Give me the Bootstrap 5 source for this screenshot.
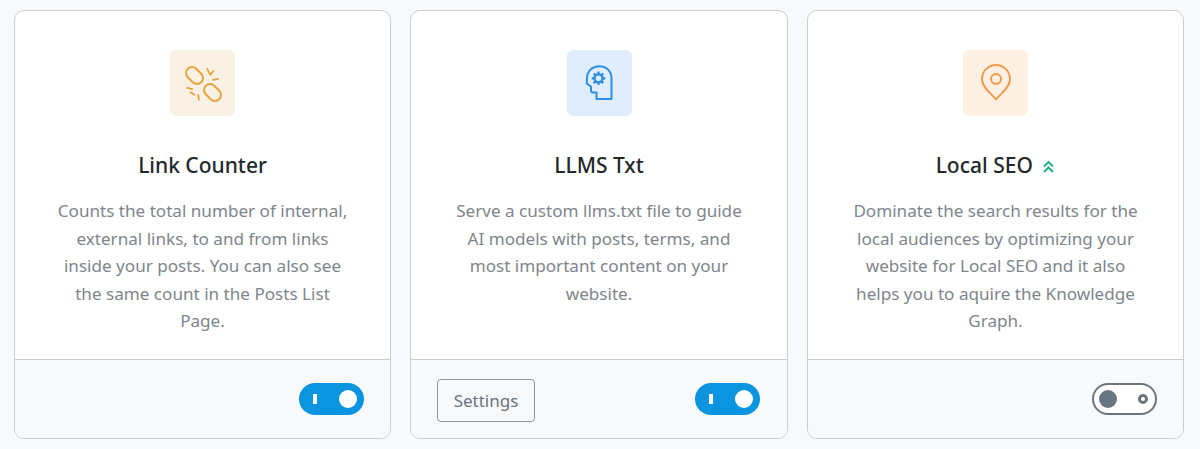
<!DOCTYPE html>
<html lang="en">
<head>
  <meta charset="UTF-8" />
  <title>Modules</title>
  <link href="https://cdn.jsdelivr.net/npm/bootstrap@5.3.0/dist/css/bootstrap.min.css" rel="stylesheet">
  <style>
    body { background: #f7f9fb; font-family: "Noto Sans", sans-serif; overflow: hidden; }
    .module-grid { display: grid; grid-template-columns: 377px 378px 377px; gap: 19px; padding: 10px 0 0 14px; height: 439px; }
    .module-card { border: 1px solid #c9ced6; border-radius: 10px; background: #fff; overflow: hidden; }
    .module-body { height: 348px; padding: 39px 40px 0; text-align: center; }
    .module-icon { width: 65px; height: 66px; border-radius: 6px; margin: 0 auto 35px; display: flex; align-items: center; justify-content: center; }
    .icon-link-tone { background: #f9f1e4; }
    .icon-llms-tone { background: #dfedfd; }
    .icon-local-tone { background: #fef0e3; }
    .module-title { font-size: 21px; font-weight: 500; line-height: 28px; color: #23282d; margin: 0 0 18px; }
    .module-text { font-size: 17.1px; line-height: 27.5px; color: #7f858c; margin: 0; }
    .module-foot { height: 79px; border-top: 1px solid #c9ced6; background: #f7f9fb; padding: 0 26px; }
    .foot-middle { padding-right: 27px; }
    .settings-btn { font-size: 17px; color: #6b7280; border: 1px solid #8f959c; border-radius: 4px; background: transparent; width: 98px; height: 43px; padding: 0; margin-top: 3px; }
    .toggle-pill { width: 65px; height: 32px; border-radius: 16px; position: relative; box-sizing: border-box; }
    .toggle-on { background: #0b95e0; }
    .toggle-off { background: #fff; border: 2px solid #6c757d; }
    .toggle-on::before { content: ""; position: absolute; left: 14px; top: 11px; width: 4px; height: 10px; background: #fff; }
    .toggle-on::after { content: ""; position: absolute; right: 7px; top: 7px; width: 18px; height: 18px; border-radius: 50%; background: #fff; }
    .toggle-off::before { content: ""; position: absolute; left: 5px; top: 5px; width: 18px; height: 18px; border-radius: 50%; background: #687684; }
    .toggle-off::after { content: ""; position: absolute; right: 7px; top: 9px; width: 10px; height: 10px; border-radius: 50%; border: 3px solid #6c757d; background: #fff; }
    .pro-mark { margin-left: 4px; vertical-align: -1px; }
  </style>
</head>
<body>
  <div class="module-grid">
    <div class="module-card d-flex flex-column">
      <div class="module-body">
        <div class="module-icon icon-link-tone">
          <svg width="40" height="40" viewBox="0 0 40 40" fill="none" stroke="#e6a33e" stroke-width="2" stroke-linecap="round">
            <rect x="2" y="6.500" width="19" height="12" rx="6" transform="rotate(45 11.500 12.500)"/>
            <rect x="20" y="23.500" width="19" height="12" rx="6" transform="rotate(45 29.500 29.500)"/>
            <path d="M24.200 5.800l2.600 5M30.200 8.200l-2.700 3.600M30.200 16.800l5-1M4.200 24.800l5 1.400M7.500 29.200l4 2.600M15.200 31.800l.6 5" stroke-width="1.800"/>
          </svg>
        </div>
        <h5 class="module-title">Link Counter</h5>
        <p class="module-text">Counts the total number of internal, external links, to and from links inside your posts. You can also see the same count in the Posts List Page.</p>
      </div>
      <div class="module-foot d-flex align-items-center justify-content-end">
        <div class="toggle-pill toggle-on"></div>
      </div>
    </div>
    <div class="module-card d-flex flex-column">
      <div class="module-body">
        <div class="module-icon icon-llms-tone">
          <svg width="40" height="40" viewBox="0 0 40 40" fill="none" stroke="#2b8fe6" stroke-width="2" stroke-linejoin="round">
            <path d="M17.500 36V29.500H14Q12 29.500 12 27V23.500L7.800 20.500Q8 17 8 15C8 8 13.500 3.200 20.500 3.200C27.500 3.200 32.500 8.500 32.500 15V36Z"/>
            <circle cx="19.500" cy="15.300" r="4" stroke-width="2.400"/>
            <path d="M19.500 8.500v3M19.500 19v3M12.700 15.300h3M23.300 15.300h3M14.700 10.500l2 2M22.300 18.100l2 2M14.700 20.100l2-2M22.300 12.500l2-2" stroke-width="2.200"/>
          </svg>
        </div>
        <h5 class="module-title">LLMS Txt</h5>
        <p class="module-text">Serve a custom llms.txt file to guide AI models with posts, terms, and most important content on your website.</p>
      </div>
      <div class="module-foot foot-middle d-flex align-items-center justify-content-between">
        <button type="button" class="btn settings-btn">Settings</button>
        <div class="toggle-pill toggle-on"></div>
      </div>
    </div>
    <div class="module-card d-flex flex-column">
      <div class="module-body">
        <div class="module-icon icon-local-tone">
          <svg width="40" height="40" viewBox="0 0 40 40" fill="none" stroke="#f2994a" stroke-width="1.900" stroke-linejoin="round">
            <path d="M20 36.500C16 31 6 25 6 16A14 14 0 0 1 34 16C34 25 24 31 20 36.500Z"/>
            <circle cx="20" cy="16" r="5"/>
          </svg>
        </div>
        <h5 class="module-title">Local SEO
          <svg class="pro-mark" width="13" height="14" viewBox="0 0 13 14" fill="none" stroke="#25b08a" stroke-width="2">
            <path d="M2 6.500l4.500-4.500 4.500 4.500M2 12l4.500-4.500 4.500 4.500"/>
          </svg>
        </h5>
        <p class="module-text">Dominate the search results for the local audiences by optimizing your website for Local SEO and it also helps you to aquire the Knowledge Graph.</p>
      </div>
      <div class="module-foot d-flex align-items-center justify-content-end">
        <div class="toggle-pill toggle-off"></div>
      </div>
    </div>
  </div>
  <script src="https://cdn.jsdelivr.net/npm/bootstrap@5.3.0/dist/js/bootstrap.bundle.min.js"></script>
</body>
</html>
